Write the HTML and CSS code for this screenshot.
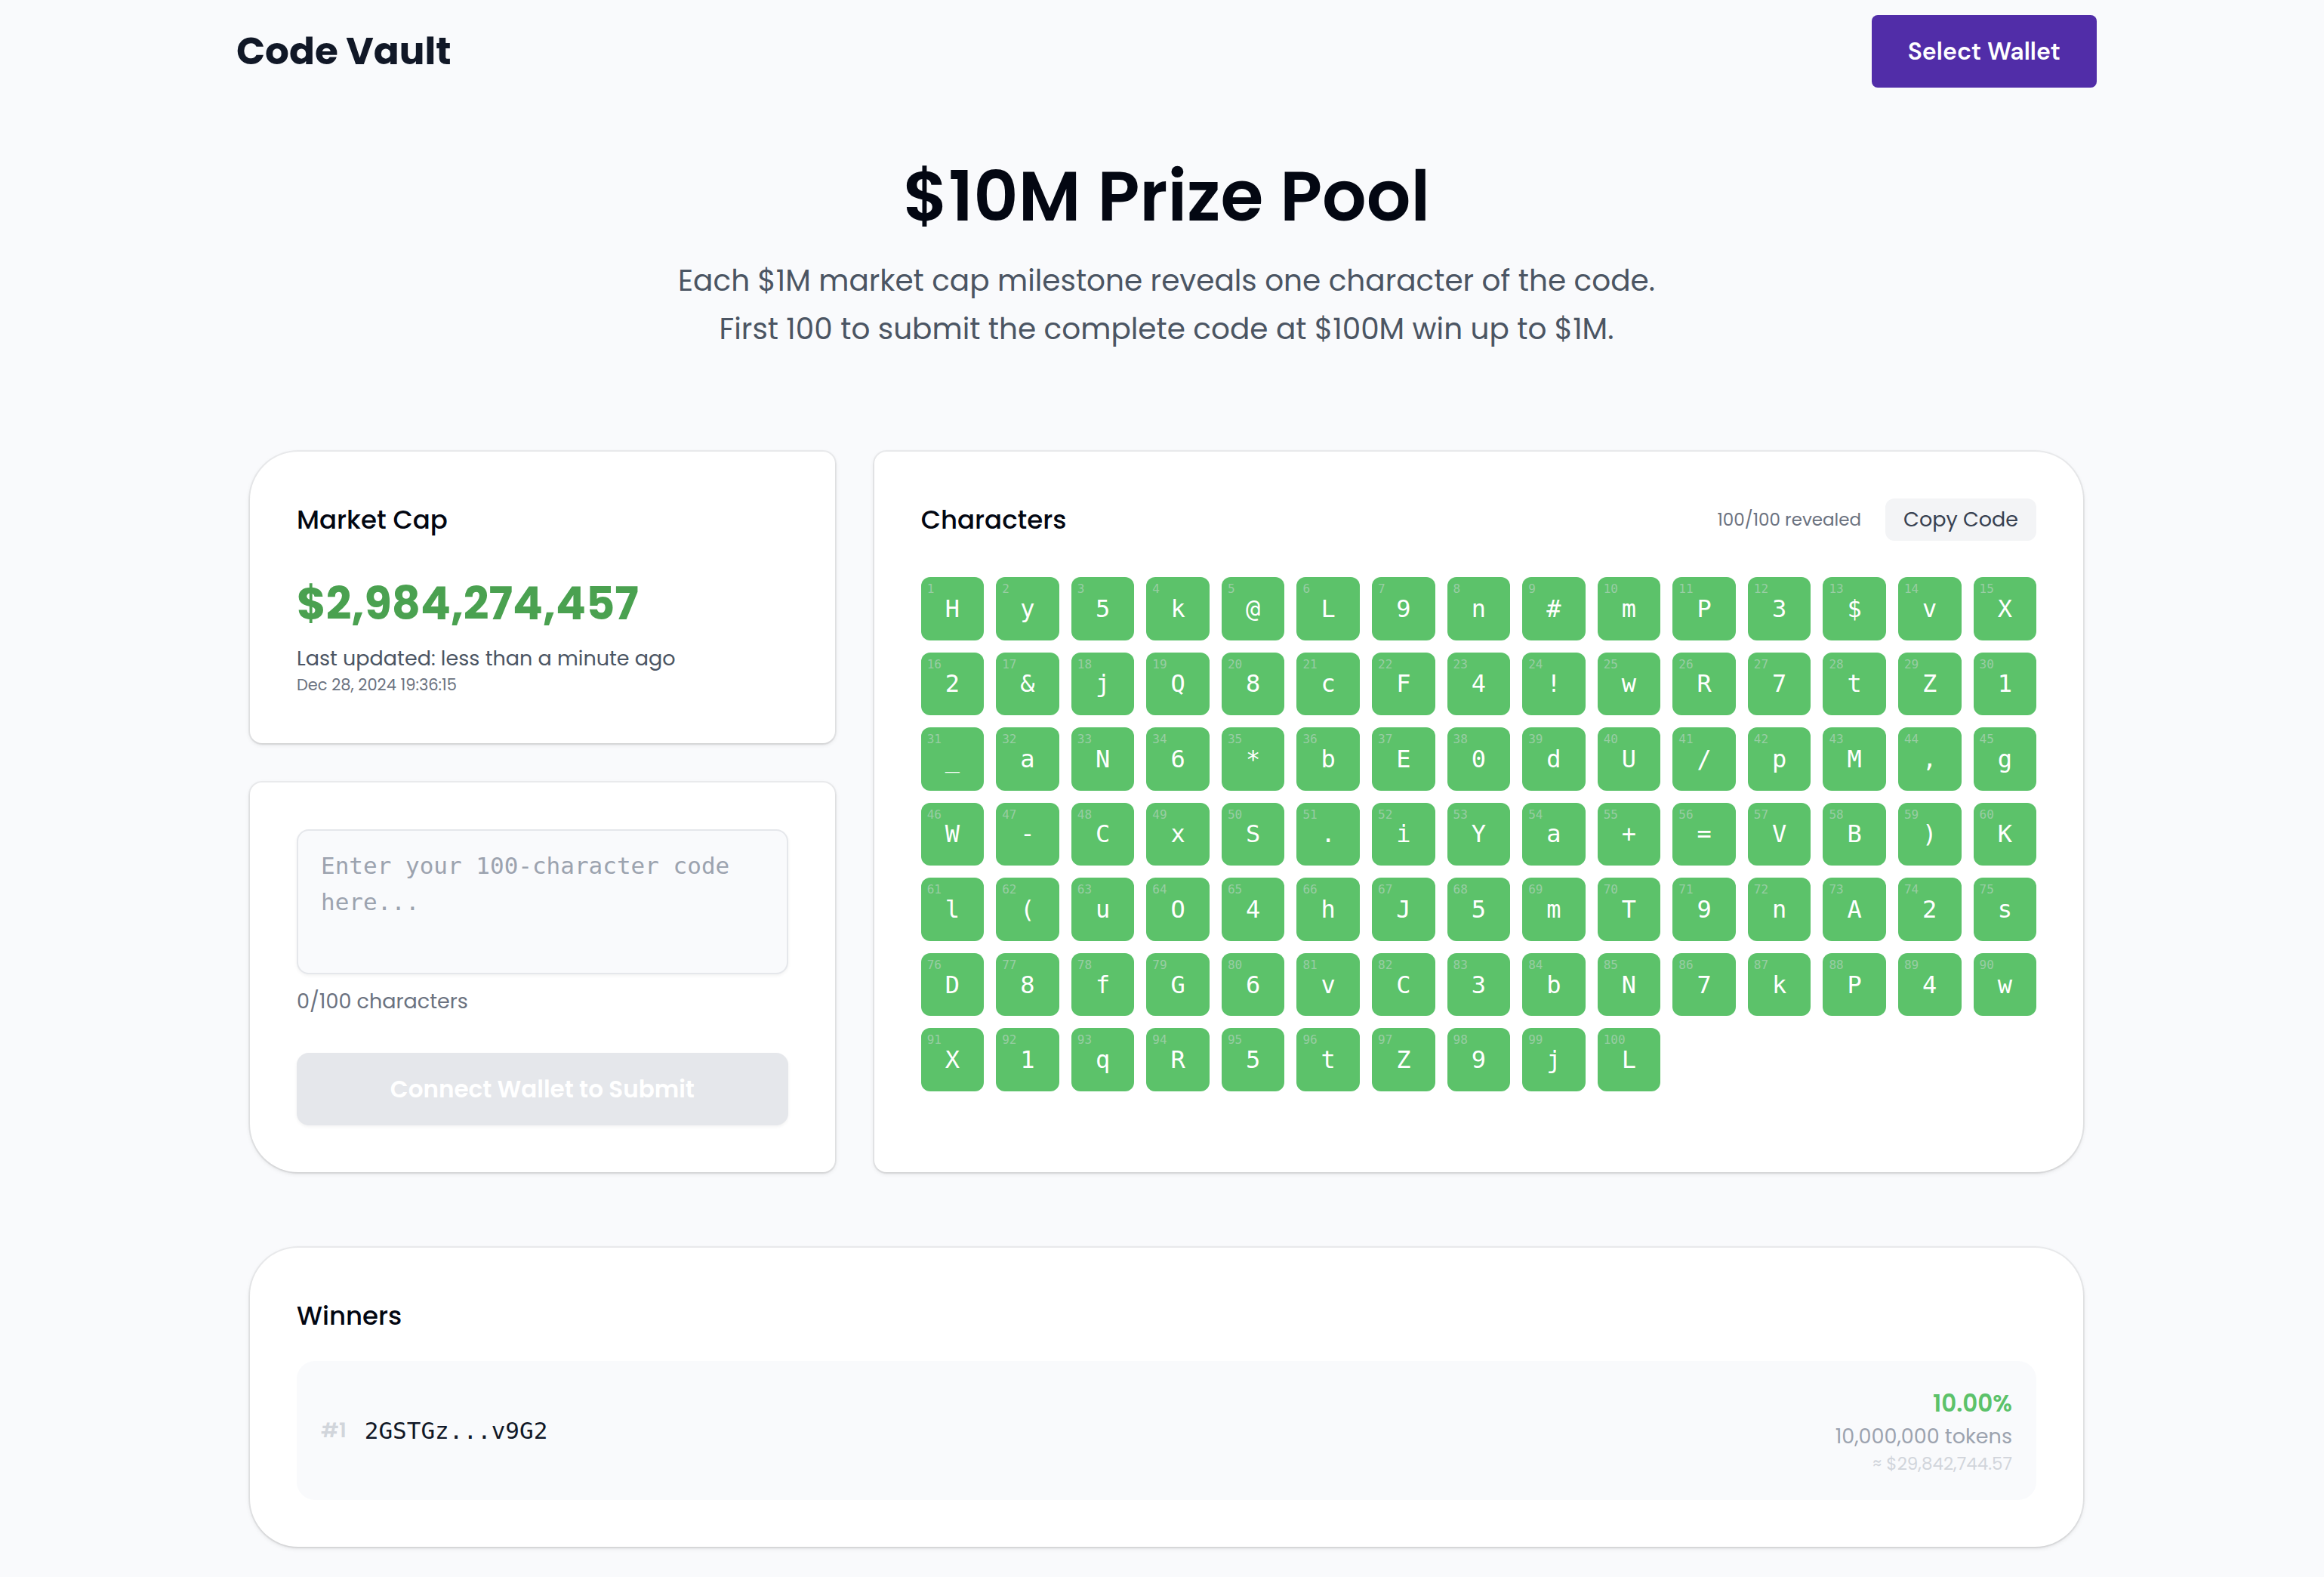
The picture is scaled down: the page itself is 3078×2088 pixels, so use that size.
FILE: index.html
```html
<!DOCTYPE html>
<html lang="en">
<head>
<meta charset="utf-8">
<meta name="viewport" content="width=device-width, initial-scale=1">
<title>Code Vault</title>
<link rel="stylesheet" href="styles.css">
</head>
<body>
<header class="site-header">
  <div class="brand">Code Vault</div>
  <button type="button" class="wallet-button">Select Wallet</button>
</header>
<main class="page">
  <section class="hero">
    <h1 class="hero-title">$10M Prize Pool</h1>
    <p class="hero-text">Each $1M market cap milestone reveals one character of the code.<br>First 100 to submit the complete code at $100M win up to $1M.</p>
  </section>
  <div class="board">
    <section class="card card-cap">
      <h2 class="card-title">Market Cap</h2>
      <p class="cap-value">$2,984,274,457</p>
      <p class="cap-updated">Last updated: less than a minute ago</p>
      <p class="cap-date">Dec 28, 2024 19:36:15</p>
    </section>
    <form class="card card-submit">
      <textarea class="code-input" aria-label="Code" aria-describedby="code-count" maxlength="100" placeholder="Enter your 100-character code here..."></textarea>
      <p class="code-count" id="code-count">0/100 characters</p>
      <button type="submit" class="submit-button" disabled>Connect Wallet to Submit</button>
    </form>
    <section class="card card-chars">
      <div class="chars-head">
        <h2 class="card-title">Characters</h2>
        <div class="chars-tools">
          <span class="chars-count">100/100 revealed</span>
          <button type="button" class="copy-button">Copy Code</button>
        </div>
      </div>
      <ol class="tiles">
        <li class="tile"><span class="tile-index">1</span>H</li>
        <li class="tile"><span class="tile-index">2</span>y</li>
        <li class="tile"><span class="tile-index">3</span>5</li>
        <li class="tile"><span class="tile-index">4</span>k</li>
        <li class="tile"><span class="tile-index">5</span>@</li>
        <li class="tile"><span class="tile-index">6</span>L</li>
        <li class="tile"><span class="tile-index">7</span>9</li>
        <li class="tile"><span class="tile-index">8</span>n</li>
        <li class="tile"><span class="tile-index">9</span>#</li>
        <li class="tile"><span class="tile-index">10</span>m</li>
        <li class="tile"><span class="tile-index">11</span>P</li>
        <li class="tile"><span class="tile-index">12</span>3</li>
        <li class="tile"><span class="tile-index">13</span>$</li>
        <li class="tile"><span class="tile-index">14</span>v</li>
        <li class="tile"><span class="tile-index">15</span>X</li>
        <li class="tile"><span class="tile-index">16</span>2</li>
        <li class="tile"><span class="tile-index">17</span>&amp;</li>
        <li class="tile"><span class="tile-index">18</span>j</li>
        <li class="tile"><span class="tile-index">19</span>Q</li>
        <li class="tile"><span class="tile-index">20</span>8</li>
        <li class="tile"><span class="tile-index">21</span>c</li>
        <li class="tile"><span class="tile-index">22</span>F</li>
        <li class="tile"><span class="tile-index">23</span>4</li>
        <li class="tile"><span class="tile-index">24</span>!</li>
        <li class="tile"><span class="tile-index">25</span>w</li>
        <li class="tile"><span class="tile-index">26</span>R</li>
        <li class="tile"><span class="tile-index">27</span>7</li>
        <li class="tile"><span class="tile-index">28</span>t</li>
        <li class="tile"><span class="tile-index">29</span>Z</li>
        <li class="tile"><span class="tile-index">30</span>1</li>
        <li class="tile"><span class="tile-index">31</span>_</li>
        <li class="tile"><span class="tile-index">32</span>a</li>
        <li class="tile"><span class="tile-index">33</span>N</li>
        <li class="tile"><span class="tile-index">34</span>6</li>
        <li class="tile"><span class="tile-index">35</span>*</li>
        <li class="tile"><span class="tile-index">36</span>b</li>
        <li class="tile"><span class="tile-index">37</span>E</li>
        <li class="tile"><span class="tile-index">38</span>0</li>
        <li class="tile"><span class="tile-index">39</span>d</li>
        <li class="tile"><span class="tile-index">40</span>U</li>
        <li class="tile"><span class="tile-index">41</span>/</li>
        <li class="tile"><span class="tile-index">42</span>p</li>
        <li class="tile"><span class="tile-index">43</span>M</li>
        <li class="tile"><span class="tile-index">44</span>,</li>
        <li class="tile"><span class="tile-index">45</span>g</li>
        <li class="tile"><span class="tile-index">46</span>W</li>
        <li class="tile"><span class="tile-index">47</span>-</li>
        <li class="tile"><span class="tile-index">48</span>C</li>
        <li class="tile"><span class="tile-index">49</span>x</li>
        <li class="tile"><span class="tile-index">50</span>S</li>
        <li class="tile"><span class="tile-index">51</span>.</li>
        <li class="tile"><span class="tile-index">52</span>i</li>
        <li class="tile"><span class="tile-index">53</span>Y</li>
        <li class="tile"><span class="tile-index">54</span>a</li>
        <li class="tile"><span class="tile-index">55</span>+</li>
        <li class="tile"><span class="tile-index">56</span>=</li>
        <li class="tile"><span class="tile-index">57</span>V</li>
        <li class="tile"><span class="tile-index">58</span>B</li>
        <li class="tile"><span class="tile-index">59</span>)</li>
        <li class="tile"><span class="tile-index">60</span>K</li>
        <li class="tile"><span class="tile-index">61</span>l</li>
        <li class="tile"><span class="tile-index">62</span>(</li>
        <li class="tile"><span class="tile-index">63</span>u</li>
        <li class="tile"><span class="tile-index">64</span>O</li>
        <li class="tile"><span class="tile-index">65</span>4</li>
        <li class="tile"><span class="tile-index">66</span>h</li>
        <li class="tile"><span class="tile-index">67</span>J</li>
        <li class="tile"><span class="tile-index">68</span>5</li>
        <li class="tile"><span class="tile-index">69</span>m</li>
        <li class="tile"><span class="tile-index">70</span>T</li>
        <li class="tile"><span class="tile-index">71</span>9</li>
        <li class="tile"><span class="tile-index">72</span>n</li>
        <li class="tile"><span class="tile-index">73</span>A</li>
        <li class="tile"><span class="tile-index">74</span>2</li>
        <li class="tile"><span class="tile-index">75</span>s</li>
        <li class="tile"><span class="tile-index">76</span>D</li>
        <li class="tile"><span class="tile-index">77</span>8</li>
        <li class="tile"><span class="tile-index">78</span>f</li>
        <li class="tile"><span class="tile-index">79</span>G</li>
        <li class="tile"><span class="tile-index">80</span>6</li>
        <li class="tile"><span class="tile-index">81</span>v</li>
        <li class="tile"><span class="tile-index">82</span>C</li>
        <li class="tile"><span class="tile-index">83</span>3</li>
        <li class="tile"><span class="tile-index">84</span>b</li>
        <li class="tile"><span class="tile-index">85</span>N</li>
        <li class="tile"><span class="tile-index">86</span>7</li>
        <li class="tile"><span class="tile-index">87</span>k</li>
        <li class="tile"><span class="tile-index">88</span>P</li>
        <li class="tile"><span class="tile-index">89</span>4</li>
        <li class="tile"><span class="tile-index">90</span>w</li>
        <li class="tile"><span class="tile-index">91</span>X</li>
        <li class="tile"><span class="tile-index">92</span>1</li>
        <li class="tile"><span class="tile-index">93</span>q</li>
        <li class="tile"><span class="tile-index">94</span>R</li>
        <li class="tile"><span class="tile-index">95</span>5</li>
        <li class="tile"><span class="tile-index">96</span>t</li>
        <li class="tile"><span class="tile-index">97</span>Z</li>
        <li class="tile"><span class="tile-index">98</span>9</li>
        <li class="tile"><span class="tile-index">99</span>j</li>
        <li class="tile"><span class="tile-index">100</span>L</li>
      </ol>
    </section>
  </div>
  <section class="card card-winners">
    <h2 class="card-title">Winners</h2>
    <ul class="winner-list">
      <li class="winner">
        <span class="winner-rank">#1</span>
        <span class="winner-address">2GSTGz...v9G2</span>
        <div class="winner-prize">
          <div class="prize-share">10.00%</div>
          <div class="prize-tokens">10,000,000 tokens</div>
          <div class="prize-usd">≈ $29,842,744.57</div>
        </div>
      </li>
    </ul>
  </section>
</main>
</body>
</html>
```
FILE: styles.css
```css
:root {
  --sans: Poppins, Inter, sans-serif;
  --mono: Menlo, "DejaVu Sans Mono", monospace;
  --ink: #030712;
  --green: #5cc26a;
  --surface: #f9fafc;
}

* { box-sizing: border-box; }

body {
  margin: 0;
  padding-left: 12px;
  background: var(--surface);
  color: var(--ink);
  font-family: var(--sans);
  font-size: 27px;
  line-height: 40px;
}

h1, h2, p, ul, ol { margin: 0; padding: 0; }
ul, ol { list-style: none; }
button, textarea { font: inherit; }

.site-header {
  display: flex;
  align-items: center;
  justify-content: space-between;
  max-width: 2464px;
  margin: 0 auto;
  padding: 20px 0;
}
.brand { color: #111827; font-size: 50px; font-weight: 700; line-height: 64px; }
.wallet-button {
  padding: 24px 48px;
  border: 0;
  border-radius: 8px;
  background: #512da8;
  color: #fff;
  font-family: "DM Sans", var(--sans);
  font-size: 32px;
  font-weight: 600;
  line-height: 48px;
}

.page { max-width: 2432px; margin: 0 auto; padding-bottom: 36px; }

.hero { padding: 64px 0 128px; text-align: center; }
.hero-title { margin-bottom: 20px; font-size: 92px; font-weight: 600; line-height: 120px; }
.hero-text { color: #4b5563; font-size: 39px; line-height: 64px; }

.board {
  display: grid;
  grid-template-columns: repeat(3, 1fr);
  grid-template-rows: auto 1fr;
  gap: 48px;
  margin-bottom: 98px;
}
.card {
  margin: 2px;
  border-radius: 16px;
  padding: 62px;
  background: #fff;
  box-shadow: 0 0 0 2px rgba(0, 0, 0, .05), 0 2px 6px rgba(0, 0, 0, .1), 0 2px 4px -2px rgba(0, 0, 0, .1);
}
.card-cap { border-top-left-radius: 64px; }
.card-submit { border-bottom-left-radius: 64px; }
.card-chars {
  grid-column: 2 / span 2;
  grid-row: 1 / span 2;
  border-top-right-radius: 64px;
  border-bottom-right-radius: 64px;
}
.card-winners { border-radius: 64px; }
.card-title { font-size: 34px; font-weight: 500; line-height: 56px; }

.cap-value { margin: 48px 0 16px; color: #4aa150; font-size: 59px; font-weight: 700; line-height: 72px; }
.cap-updated { color: #4b5563; }
.cap-date { color: #6b7280; font-size: 21px; line-height: 30px; }

.code-input {
  display: block;
  width: 100%;
  height: 192px;
  padding: 22px 30px;
  border: 2px solid #e5e7eb;
  border-radius: 16px;
  background: var(--surface);
  box-shadow: 0 2px 4px rgba(0, 0, 0, .05);
  color: var(--ink);
  font-family: var(--mono);
  font-size: 31px;
  line-height: 48px;
  resize: none;
}
.code-input::placeholder { color: #9ca3af; opacity: 1; }
.code-count { margin: 16px 0 48px; color: #6b7280; }
.submit-button {
  display: block;
  width: 100%;
  padding: 24px;
  border: 0;
  border-radius: 16px;
  background: #e5e7eb;
  box-shadow: 0 2px 4px rgba(0, 0, 0, .05);
  color: #fff;
  font-size: 31px;
  font-weight: 600;
  line-height: 48px;
}

.chars-head { display: flex; align-items: center; justify-content: space-between; margin-bottom: 48px; }
.chars-tools { display: flex; align-items: center; gap: 32px; }
.chars-count { color: #6b7280; font-size: 23px; }
.copy-button {
  padding: 8px 24px;
  border: 0;
  border-radius: 12px;
  background: #f3f4f6;
  color: #374151;
}

.tiles { display: grid; grid-template-columns: repeat(15, 1fr); gap: 16px; }
.tile {
  position: relative;
  display: flex;
  align-items: center;
  justify-content: center;
  aspect-ratio: 1;
  border-radius: 12px;
  background: var(--green);
  color: #fff;
  font-family: var(--mono);
  font-size: 32px;
}
.tile-index {
  position: absolute;
  top: 4px;
  left: 8px;
  color: #98cda3;
  font-size: 16px;
  line-height: 24px;
}

.winner-list { margin-top: 32px; }
.winner {
  display: flex;
  align-items: center;
  gap: 24px;
  padding: 32px;
  border-radius: 24px;
  background: var(--surface);
}
.winner-rank { color: #d1d5db; font-weight: 600; }
.winner-address { color: #111827; font-family: var(--mono); font-size: 31px; line-height: 48px; }
.winner-prize { margin-left: auto; text-align: right; }
.prize-share { color: var(--green); font-size: 31px; font-weight: 600; line-height: 48px; }
.prize-tokens { color: #9ca3af; }
.prize-usd { color: #d1d5db; font-size: 23px; line-height: 32px; }
```
